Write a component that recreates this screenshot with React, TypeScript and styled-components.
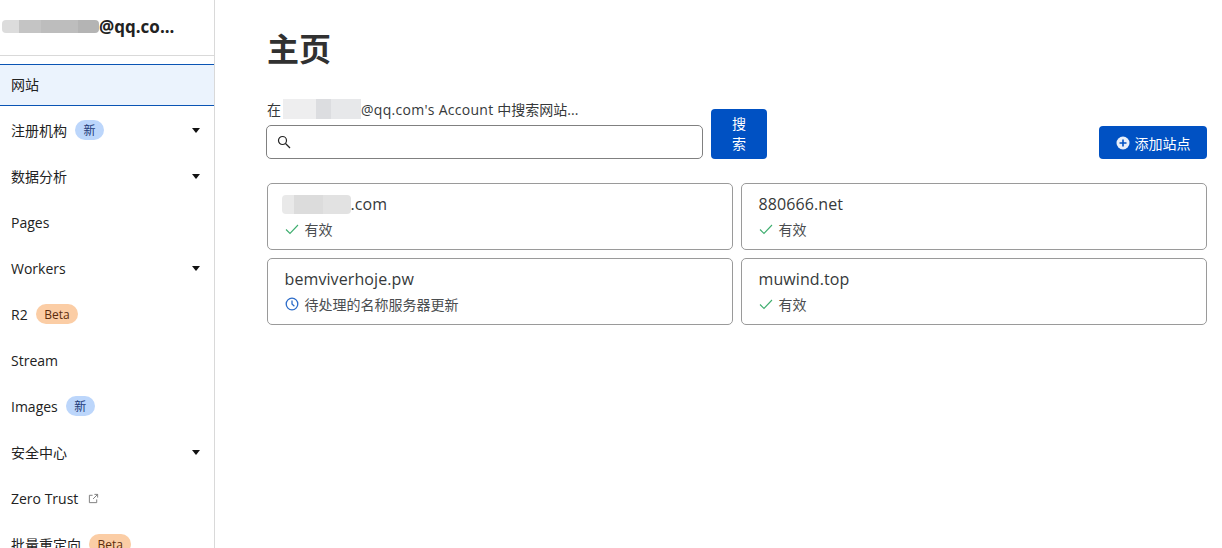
import React from 'react'
import styled, { createGlobalStyle } from 'styled-components'

const GlobalStyle = createGlobalStyle`
  html, body {
    margin: 0;
    height: 100%;
    overflow: hidden;
    background: #fff;
  }
  body {
    font-family: 'Open Sans', 'Noto Sans CJK SC', sans-serif;
    color: #313131;
  }
`

type NavEntry = {
  label: string
  badge?: 'new' | 'beta'
  caret?: boolean
  external?: boolean
}

const navItems: NavEntry[] = [
  { label: '注册机构', badge: 'new', caret: true },
  { label: '数据分析', caret: true },
  { label: 'Pages' },
  { label: 'Workers', caret: true },
  { label: 'R2', badge: 'beta' },
  { label: 'Stream' },
  { label: 'Images', badge: 'new' },
  { label: '安全中心', caret: true },
  { label: 'Zero Trust', external: true },
  { label: '批量重定向', badge: 'beta' },
]

type Site = {
  name: string
  redacted?: boolean
  pending?: boolean
}

const sites: Site[] = [
  { name: '.com', redacted: true },
  { name: '880666.net' },
  { name: 'bemviverhoje.pw', pending: true },
  { name: 'muwind.top' },
]

const App = () => {
  return (
    <Page>
      <GlobalStyle />
      <Sidebar>
        <Account>
          <AccountBlur />
          <span>@qq.co...</span>
        </Account>
        <Nav>
          <ActiveItem>网站</ActiveItem>
          {navItems.map((item) => (
            <NavItem key={item.label}>
              <span>{item.label}</span>
              {item.badge && (
                <Badge $kind={item.badge}>{item.badge === 'new' ? '新' : 'Beta'}</Badge>
              )}
              {item.external && (
                <ExternalIcon viewBox="0 0 12 12">
                  <path d="M5 2.5H1.5v8h8V7M7 1.5h3.5V5M10.5 1.5 5.5 6.5" />
                </ExternalIcon>
              )}
              {item.caret && <Caret />}
            </NavItem>
          ))}
        </Nav>
      </Sidebar>
      <Main>
        <Title>主页</Title>
        <Toolbar>
          <SearchForm>
            <SearchField>
              <SearchLabel>
                在<LabelBlur />
                <LatinPart>@qq.com's Account </LatinPart>中搜索网站...
              </SearchLabel>
              <InputBox>
                <SearchIcon viewBox="0 0 14 14">
                  <circle cx="5.5" cy="5.5" r="4" />
                  <path d="m8.5 8.5 4.5 4.5" />
                </SearchIcon>
              </InputBox>
            </SearchField>
            <SearchButton>搜索</SearchButton>
          </SearchForm>
          <AddButton>
            <PlusIcon viewBox="0 0 14 14">
              <circle cx="7" cy="7" r="6.5" />
              <path d="M7 3.5v7M3.5 7h7" />
            </PlusIcon>
            添加站点
          </AddButton>
        </Toolbar>
        <SiteGrid>
          {sites.map((site) => (
            <SiteCard key={site.name}>
              <SiteName>
                {site.redacted && <NameBlur />}
                {site.name}
              </SiteName>
              {site.pending ? (
                <Status>
                  <ClockIcon viewBox="0 0 14 14">
                    <circle cx="7" cy="7" r="5.8" />
                    <path d="M7 3.5V7l2.4 2.2" />
                  </ClockIcon>
                  待处理的名称服务器更新
                </Status>
              ) : (
                <Status>
                  <CheckIcon viewBox="0 0 14 14">
                    <path d="m1 7.5 4 4L13 3" />
                  </CheckIcon>
                  有效
                </Status>
              )}
            </SiteCard>
          ))}
        </SiteGrid>
      </Main>
    </Page>
  )
}

export default App

const Page = styled.div`
  display: flex;
  height: 548px;
  overflow: hidden;
`

const Sidebar = styled.aside`
  flex: 0 0 215px;
  box-sizing: border-box;
  border-right: 1px solid #d9d9d9;
  overflow: hidden;
`

const Account = styled.div`
  display: flex;
  align-items: center;
  height: 53px;
  padding: 0 0 2px 2px;
  border-bottom: 1px solid #d9d9d9;
  font-size: 17px;
  font-weight: 700;
  color: #222;
`

const AccountBlur = styled.span`
  width: 97px;
  height: 13px;
  border-radius: 4px;
  background: linear-gradient(90deg, #dcdcdc 0 18%, #c4c4c4 18% 40%, #bdbdbd 40% 78%, #b4b4b4 78%);
`

const Nav = styled.nav`
  display: flex;
  flex-direction: column;
  padding-top: 8px;
`

const ActiveItem = styled.div`
  display: flex;
  align-items: center;
  box-sizing: border-box;
  height: 42px;
  margin-bottom: 1px;
  padding: 0 11px 2px;
  background: #ebf3fd;
  border-top: 1px solid #0a54b4;
  border-bottom: 1px solid #0a54b4;
  font-size: 14px;
  color: #222;
`

const NavItem = styled.div`
  display: flex;
  align-items: center;
  flex: 0 0 46px;
  padding: 0 14px 0 11px;
  font-size: 14px;
  color: #222;
  white-space: nowrap;
`

const Badge = styled.span<{ $kind: 'new' | 'beta' }>`
  display: inline-flex;
  align-items: center;
  justify-content: center;
  height: 20px;
  margin-left: 8px;
  padding: 0 8.5px;
  border-radius: 10px;
  font-size: 12px;
  background: ${({ $kind }) => ($kind === 'new' ? '#bcd6fb' : '#fbcda5')};
  color: ${({ $kind }) => ($kind === 'new' ? '#1c3a78' : '#5b2c0c')};
`

const Caret = styled.span`
  margin-left: auto;
  width: 0;
  height: 0;
  border-left: 4.5px solid transparent;
  border-right: 4.5px solid transparent;
  border-top: 5px solid #111;
`

const ExternalIcon = styled.svg`
  width: 11px;
  height: 11px;
  margin-left: 10px;
  fill: none;
  stroke: #777;
  stroke-width: 1;
`

const Main = styled.main`
  flex: 1;
  min-width: 0;
  padding: 0 15px 0 52px;
`

const Title = styled.h1`
  margin: 0;
  padding-top: 28px;
  font-size: 32px;
  line-height: 42px;
  font-weight: 700;
  color: #313131;
`

const Toolbar = styled.div`
  display: flex;
  align-items: flex-end;
  justify-content: space-between;
  margin-top: 31px;
`

const SearchForm = styled.div`
  display: flex;
  align-items: flex-end;
  gap: 8px;
`

const SearchField = styled.div`
  display: flex;
  flex-direction: column;
  gap: 8px;
  margin-left: -1px;
`

const SearchLabel = styled.div`
  display: flex;
  align-items: center;
  height: 16px;
  margin-left: 1px;
  font-size: 14px;
  color: #36393a;
  white-space: pre;
`

const LatinPart = styled.span`
  letter-spacing: 0.28px;
`

const LabelBlur = styled.span`
  width: 78px;
  height: 20px;
  margin-left: 2px;
  background: linear-gradient(90deg, #eeeeef 0 42%, #dcdde0 42% 62%, #e7e8ea 62%);
`

const InputBox = styled.div`
  display: flex;
  align-items: center;
  box-sizing: border-box;
  width: 437px;
  height: 34px;
  padding-left: 10px;
  border: 1px solid #808080;
  border-radius: 5px;
  background: #fff;
`

const SearchIcon = styled.svg`
  width: 14px;
  height: 14px;
  fill: none;
  stroke: #222;
  stroke-width: 1.2;
`

const SearchButton = styled.button`
  box-sizing: border-box;
  width: 56px;
  height: 50px;
  padding: 0 20px;
  border: 0;
  border-radius: 4px;
  background: #0051c3;
  color: #fff;
  font-family: inherit;
  font-size: 14px;
  line-height: 20px;
`

const AddButton = styled.button`
  display: flex;
  align-items: center;
  justify-content: center;
  gap: 5px;
  width: 108px;
  height: 33px;
  padding: 0;
  border: 0;
  border-radius: 4px;
  background: #0051c3;
  color: #fff;
  font-family: inherit;
  font-size: 14px;
`

const PlusIcon = styled.svg`
  width: 14px;
  height: 14px;
  circle {
    fill: #e8effa;
  }
  path {
    stroke: #0051c3;
    stroke-width: 1.6;
  }
`

const SiteGrid = styled.div`
  display: grid;
  grid-template-columns: 1fr 1fr;
  gap: 8px;
  margin-top: 24px;
`

const SiteCard = styled.div`
  box-sizing: border-box;
  height: 67px;
  padding: 8px 16.5px;
  border: 1px solid #9a9a9a;
  border-radius: 5px;
`

const SiteName = styled.div`
  display: flex;
  align-items: center;
  height: 24px;
  font-size: 16px;
  letter-spacing: 0.1px;
  color: #36393a;
`

const NameBlur = styled.span`
  width: 69px;
  height: 19px;
  margin-left: -3px;
  border-radius: 4px;
  background: linear-gradient(90deg, #e9e9e9 0 18%, #dcdcdc 18% 60%, #e2e2e2 60%);
`

const Status = styled.div`
  display: flex;
  align-items: center;
  gap: 6px;
  margin-top: 3px;
  height: 20px;
  font-size: 14px;
  color: #4a4d4f;
`

const CheckIcon = styled.svg`
  width: 14px;
  height: 14px;
  fill: none;
  stroke: #3fae6f;
  stroke-width: 1.1;
`

const ClockIcon = styled.svg`
  width: 14px;
  height: 14px;
  fill: none;
  stroke: #2c6cc9;
  stroke-width: 1.3;
`
